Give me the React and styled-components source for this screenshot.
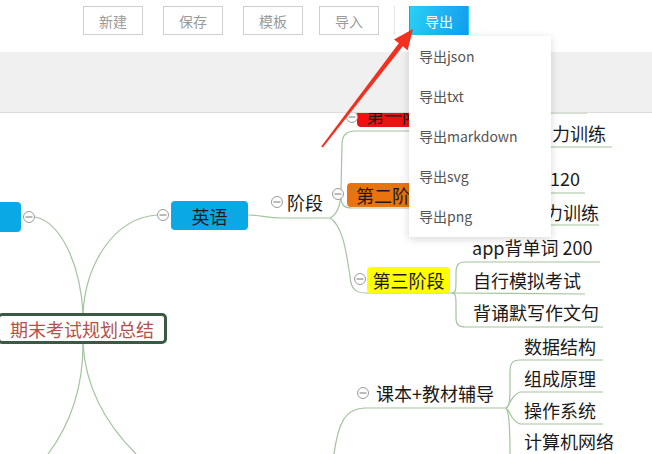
import React from 'react';
import styled, { createGlobalStyle } from 'styled-components';

const GlobalStyle = createGlobalStyle`
  html, body {
    margin: 0;
    padding: 0;
    background: #ffffff;
  }
  body {
    font-family: "Noto Sans CJK SC", "Noto Sans", sans-serif;
  }
  * {
    box-sizing: border-box;
  }
`;

const toolButtons = ['新建', '保存', '模板', '导入'];
const exportItems = ['导出json', '导出txt', '导出markdown', '导出svg', '导出png'];

// nodes of the mind map, placed at their canvas coordinates
const textNodes = [
  { text: '阶段', x: 287, y: 202 },
  { text: '力训练', x: 552, y: 133 },
  { text: '120', x: 550, y: 178 },
  { text: '听力训练', x: 527, y: 212 },
  { text: 'app背单词 200', x: 472, y: 247 },
  { text: '自行模拟考试', x: 473, y: 280 },
  { text: '背诵默写作文句', x: 473, y: 312 },
  { text: '课本+教材辅导', x: 376, y: 393 },
  { text: '数据结构', x: 524, y: 346 },
  { text: '组成原理', x: 524, y: 378 },
  { text: '操作系统', x: 524, y: 410 },
  { text: '计算机网络', x: 524, y: 441 },
];

const boxNodes = [
  { text: '', x: -60, y: 202, w: 81, h: 30, bg: '#0aa9e6' },
  { text: '英语', x: 171, y: 201, w: 77, h: 29, bg: '#0aa9e6' },
  { text: '第一阶段', x: 357, y: 103, w: 90, h: 24, bg: '#ee1111' },
  { text: '第二阶段', x: 347, y: 183, w: 90, h: 24, bg: '#e8730f' },
  { text: '第三阶段', x: 367, y: 267, w: 83, h: 26, bg: '#ffff00' },
];

const links = [
  'M35 217 C60 222, 80 262, 83 313',
  'M157 215 C115 218, 86 262, 83 313',
  'M83 344 C83 395, 66 430, 48 454',
  'M83 344 C86 395, 112 430, 136 454',
  'M248 215 C262 215, 265 218, 282 218 L330 218',
  'M330 218 C338 214, 341 205, 341 190 L342 145 C342 135, 346 131, 356 131 L420 131',
  'M341 196 C341 204, 343 208, 352 208 L420 208',
  'M330 218 C342 225, 346 250, 349 270 L351 283 C353 290, 357 293, 366 293 L452 293',
  'M452 293 C456 293, 456 289, 456 280 L456 273 C456 265, 458 262, 466 262 L600 262',
  'M452 293 L585 294',
  'M452 293 C456 293, 456 297, 456 306 L456 318 C456 324, 458 327, 466 327 L603 327',
  'M420 113 L587 113',
  'M420 147 L612 147',
  'M420 193 L585 193',
  'M420 225 L599 225',
  'M334 454 C338 425, 344 408, 366 408 L506 408',
  'M506 408 C510 407, 510 398, 510 385 L510 372 C510 364, 512 360, 520 360 L603 360',
  'M506 408 C510 406, 510 396, 520 392 L603 392',
  'M506 408 C510 410, 510 420, 520 424 L603 424',
  'M506 408 C510 412, 510 440, 510 454',
];

const toggles = [
  [29, 217], [163, 215], [277, 202], [352, 117], [338, 194], [360, 279], [363, 393],
];

function App() {
  return (
    <>
      <GlobalStyle />
      <Page>
        <Header>
          {toolButtons.map((label) => (
            <ToolButton key={label}>{label}</ToolButton>
          ))}
          <Divider />
          <ToolButton $primary>导出</ToolButton>
          <Avatar />
        </Header>
        <Band />
        <Canvas>
          <Board>
            <svg width="652" height="454" viewBox="0 0 652 454">
              {links.map((d, i) => (
                <path key={i} d={d} fill="none" stroke="#a3c49e" strokeWidth="1.2" />
              ))}
            </svg>
            {boxNodes.map((n, i) => (
              <BoxNode
                key={i}
                $bg={n.bg}
                style={{ left: n.x, top: n.y, width: n.w, height: n.h }}
              >
                {n.text}
              </BoxNode>
            ))}
            <RootNode>期末考试规划总结</RootNode>
            {textNodes.map((n) => (
              <TextNode key={n.text + n.y} style={{ left: n.x, top: n.y }}>
                {n.text}
              </TextNode>
            ))}
            <svg width="652" height="454" viewBox="0 0 652 454" style={{ position: 'absolute', left: 0, top: 0 }}>
              {toggles.map(([cx, cy]) => (
                <g key={cx + '-' + cy}>
                  <circle cx={cx} cy={cy} r="5.5" fill="#fff" stroke="#9a9a9a" strokeWidth="1" />
                  <line x1={cx - 3.5} y1={cy} x2={cx + 3.5} y2={cy} stroke="#777" strokeWidth="1" />
                </g>
              ))}
            </svg>
          </Board>
        </Canvas>

        <Dropdown>
          {exportItems.map((item) => (
            <DropItem key={item}>{item}</DropItem>
          ))}
        </Dropdown>

        <Pointer width="652" height="454" viewBox="0 0 652 454">
          <polygon
            points="322.8,147.6 402.8,46.3 407.6,50.2 413,29 394,39.5 398.8,43.3 321.2,146.4"
            fill="#f2301f"
          />
        </Pointer>
      </Page>
    </>
  );
}

export default App;

const Page = styled.div`
  position: relative;
  width: 652px;
  height: 454px;
  overflow: hidden;
  display: flex;
  flex-direction: column;
  background: #ffffff;
`;

const Header = styled.div`
  height: 52px;
  display: flex;
  align-items: flex-start;
  padding: 6px 0 0 83px;
  gap: 20px;
  background: #ffffff;
`;

const ToolButton = styled.div`
  width: 60px;
  height: 29px;
  display: flex;
  align-items: center;
  justify-content: center;
  font-size: 14px;
  color: ${(p) => (p.$primary ? '#ffffff' : '#9a9a9a')};
  border: 1px solid ${(p) => (p.$primary ? 'transparent' : '#cfcfcf')};
  background: ${(p) => (p.$primary ? 'linear-gradient(100deg, #27d0f5 0%, #159cf0 100%)' : '#ffffff')};
  &:nth-child(4) {
    margin-left: -4px;
  }
`;

const Divider = styled.div`
  width: 1px;
  height: 29px;
  background: #e6e6e6;
  margin: 0 -6px 0 -5px;
`;

const Avatar = styled.div`
  width: 22px;
  height: 22px;
  border-radius: 50%;
  background: #eeeeee;
  border: 1px solid #dddddd;
  margin: 6px -31px 0 auto;
`;

const Band = styled.div`
  height: 61px;
  background: #f0f0f0;
  border-bottom: 1px solid #dcdcdc;
`;

const Canvas = styled.div`
  position: relative;
  flex: 1;
  overflow: hidden;
  background: #ffffff;
`;

const Board = styled.div`
  position: absolute;
  left: 0;
  top: -113px;
  width: 652px;
  height: 454px;
  svg {
    display: block;
  }
`;

const BoxNode = styled.div`
  position: absolute;
  display: flex;
  align-items: center;
  justify-content: center;
  border-radius: 4px;
  background: ${(p) => p.$bg};
  font-size: 18px;
  color: #1a1a1a;
  white-space: nowrap;
`;

const RootNode = styled.div`
  position: absolute;
  left: -3px;
  top: 313px;
  width: 170px;
  height: 31px;
  display: flex;
  align-items: center;
  padding-left: 10px;
  border: 3px solid #3b5a43;
  border-radius: 5px;
  background: #ffffff;
  color: #b5504c;
  font-size: 18px;
  white-space: nowrap;
`;

const TextNode = styled.div`
  position: absolute;
  transform: translateY(-50%);
  font-size: 18px;
  line-height: 24px;
  color: #1a1a1a;
  white-space: nowrap;
`;

const Dropdown = styled.div`
  position: absolute;
  left: 409px;
  top: 36px;
  width: 142px;
  height: 201px;
  background: #ffffff;
  box-shadow: 0 2px 8px rgba(0, 0, 0, 0.16);
  display: flex;
  flex-direction: column;
`;

const DropItem = styled.div`
  height: 40px;
  display: flex;
  align-items: center;
  padding-left: 10px;
  font-size: 14px;
  color: #555555;
`;

const Pointer = styled.svg`
  position: absolute;
  left: 0;
  top: 0;
  pointer-events: none;
`;
